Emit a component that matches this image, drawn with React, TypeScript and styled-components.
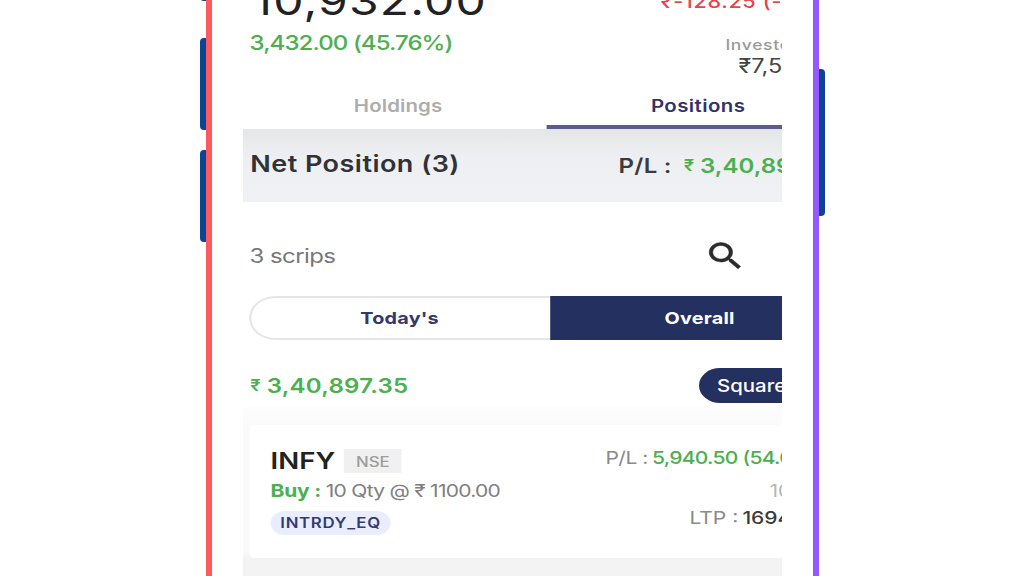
import React from "react";
import styled, { createGlobalStyle } from "styled-components";
import { MdSearch } from "react-icons/md";

const GlobalStyle = createGlobalStyle`
  * {
    box-sizing: border-box;
  }
  body {
    margin: 0;
    background-color: #ffffff;
    font-family: "Inter", "Liberation Sans", sans-serif;
  }
`;

const NAVY = "#24305f";
const GREEN = "#4caf50";

const Stage = styled.div`
  width: 1024px;
  height: 576px;
  overflow: hidden;
  display: flex;
  padding-left: 200px;
`;

const Keys = styled.div<{ $top: number }>`
  display: flex;
  flex-direction: column;
  gap: 20px;
  width: 6px;
  margin-top: ${(p) => p.$top}px;
`;

const Key = styled.div<{ $height: number; $top?: number; $right?: boolean }>`
  flex: none;
  height: ${(p) => p.$height}px;
  margin-top: ${(p) => p.$top || 0}px;
  background-color: #0b4493;
  border-radius: ${(p) => (p.$right ? "0 4px 4px 0" : "4px 0 0 4px")};
`;

const Frame = styled.div`
  width: 613px;
  height: 576px;
  border-left: 6px solid #ff5960;
  border-right: 6px solid #9159ff;
  padding: 0 31px;
`;

const Screen = styled.div`
  width: 539px;
  height: 576px;
  overflow: hidden;
`;

/* the app is wider than the visible part of the screen */
const Page = styled.div`
  width: 505px;
  height: 576px;
  transform: scaleX(1.2);
  transform-origin: 0 0;
  overflow: hidden;
`;

const Text = styled.span<{
  $size: number;
  $color: string;
  $weight?: number;
  $line?: number;
  $spacing?: number;
  $left?: number;
  $top?: number;
}>`
  flex: none;
  white-space: pre;
  font-size: ${(p) => p.$size}px;
  color: ${(p) => p.$color};
  font-weight: ${(p) => p.$weight || 400};
  line-height: ${(p) => p.$line || 24}px;
  letter-spacing: ${(p) => p.$spacing || 0}px;
  margin-left: ${(p) => p.$left || 0}px;
  margin-top: ${(p) => p.$top || 0}px;
`;

const Summary = styled.div`
  display: grid;
  grid-template-columns: 340px 1fr;
  height: 82px;
`;

const Column = styled.div<{ $top: number }>`
  display: flex;
  flex-direction: column;
  align-items: flex-start;
  margin-top: ${(p) => p.$top}px;
`;

const Tabs = styled.div`
  display: grid;
  grid-template-columns: 1fr 1fr;
  height: 47px;
`;

const Tab = styled.div<{ $active?: boolean }>`
  height: 47px;
  padding: ${(p) => (p.$active ? "2px 0 0 1px" : "2px 0 0 6px")};
  text-align: center;
  font-size: 17px;
  font-weight: 600;
  line-height: 44px;
  letter-spacing: ${(p) => (p.$active ? 0.35 : 0.1)}px;
  color: ${(p) => (p.$active ? "#30336b" : "#adadad")};
  border-bottom: ${(p) => (p.$active ? "4px solid #5c5b91" : "none")};
`;

const NetBar = styled.div`
  display: grid;
  grid-template-columns: 307px 1fr;
  align-items: center;
  height: 73px;
  padding-left: 6px;
  background: linear-gradient(#e4e6e7, #edeff2 40%, #eff1f5);
`;

const NetTitle = styled.div`
  padding-bottom: 4px;
  font-size: 22.5px;
  font-weight: 600;
  line-height: 24px;
  letter-spacing: 0.4px;
  color: #303236;
`;

const Line = styled.div<{ $height?: number }>`
  display: flex;
  align-items: center;
  height: ${(p) => (p.$height ? `${p.$height}px` : "auto")};
`;

const SearchRow = styled.div`
  display: grid;
  grid-template-columns: 378px 1fr;
  align-items: center;
  height: 94px;
  padding: 14px 0 0 5.5px;
`;

const SearchIcon = styled(MdSearch)`
  display: block;
  width: 36px;
  height: 36px;
  color: #2b2b2b;
  stroke-width: 0.3px;

  path[fill="none"] {
    stroke: none;
  }
`;

const Toggle = styled.div`
  display: grid;
  grid-template-columns: 1fr 1fr;
  width: 502px;
  height: 43px;
  margin: 0 0 1px 5px;
`;

const ToggleHalf = styled.div<{ $active?: boolean }>`
  padding-right: 2px;
  text-align: center;
  font-size: 16.5px;
  font-weight: 700;
  line-height: ${(p) => (p.$active ? 44 : 40)}px;
  letter-spacing: 0.2px;
  color: ${(p) => (p.$active ? "#ffffff" : "#34386c")};
  background-color: ${(p) => (p.$active ? NAVY : "#ffffff")};
  border: ${(p) => (p.$active ? "none" : "2px solid #e6e6e6")};
  border-right: none;
  border-radius: ${(p) => (p.$active ? "0 22px 22px 0" : "22px 0 0 22px")};
`;

const TotalRow = styled.div`
  display: grid;
  grid-template-columns: 373.5px 1fr;
  align-items: center;
  height: 67px;
  padding: 24px 0 0 6px;
`;

const SquareOff = styled.div`
  width: 122px;
  height: 35px;
  padding-left: 15.5px;
  border-radius: 18px;
  background-color: ${NAVY};
  color: #ffffff;
  font-size: 17px;
  font-weight: 500;
  line-height: 36px;
  white-space: nowrap;
`;

const List = styled.div`
  height: 169px;
  padding: 18px 0 0 6px;
  background: linear-gradient(#fdfdfd, #fafafa 12%, #fafafa 85%, #f3f3f3 90%);
`;

const Card = styled.div`
  display: grid;
  grid-template-columns: 279px 1fr;
  height: 133px;
  padding: 20px 0 0 17px;
  border-radius: 3px 0 0 3px;
  background-color: #ffffff;
`;

const Exchange = styled.span`
  width: 48px;
  height: 24px;
  margin-left: 7.5px;
  background-color: #f0f0f0;
  color: #9c9c9c;
  font-size: 14px;
  font-weight: 500;
  line-height: 25px;
  text-align: center;
`;

const Product = styled.span`
  width: 100px;
  height: 24px;
  margin-top: 2px;
  border-radius: 12px;
  background-color: #e9edfd;
  color: #343a73;
  font-size: 14px;
  font-weight: 600;
  line-height: 24px;
  letter-spacing: 0.55px;
  text-align: center;
`;

const App = () => {
  return (
    <>
      <GlobalStyle />
      <Stage>
        <Keys $top={-19}>
          <Key $height={20} />
          <Key $height={92} $top={17} />
          <Key $height={92} />
        </Keys>
        <Frame>
          <Screen>
            <Page>
              <Summary>
                <Column $top={-19}>
                  <Text $size={40} $line={40} $left={8} $spacing={0.95} $color="#222222">
                    10,932.00
                  </Text>
                  <Text
                    $size={20}
                    $line={44}
                    $left={5.5}
                    $weight={500}
                    $spacing={-0.75}
                    $color={GREEN}
                  >
                    3,432.00 (45.76%)
                  </Text>
                </Column>
                <Column $top={-10}>
                  <Text $size={18} $left={8} $weight={500} $spacing={0.55} $color="#e5444a">
                    ₹-128.25 (-1.16%)
                  </Text>
                  <Text
                    $size={14.5}
                    $line={62}
                    $left={62}
                    $weight={500}
                    $spacing={0.6}
                    $color="#999999"
                  >
                    Invested
                  </Text>
                  <Text $size={19.5} $line={1} $left={73} $top={-10} $color="#444444">
                    ₹7,500.00
                  </Text>
                </Column>
              </Summary>

              <Tabs>
                <Tab>Holdings</Tab>
                <Tab $active>Positions</Tab>
              </Tabs>

              <NetBar>
                <NetTitle>Net Position (3)</NetTitle>
                <Line>
                  <Text $size={20} $weight={600} $spacing={0.2} $color="#3a3c40">
                    P/L :
                  </Text>
                  <Text $size={15.5} $left={10} $weight={600} $color={GREEN}>
                    ₹
                  </Text>
                  <Text $size={20} $left={5} $weight={600} $color={GREEN}>
                    3,40,897.35
                  </Text>
                </Line>
              </NetBar>

              <SearchRow>
                <Text $size={20} $spacing={-0.5} $color="#777777">
                  3 scrips
                </Text>
                <SearchIcon />
              </SearchRow>

              <Toggle>
                <ToggleHalf>Today's</ToggleHalf>
                <ToggleHalf $active>Overall</ToggleHalf>
              </Toggle>

              <TotalRow>
                <Line>
                  <Text $size={15.5} $weight={600} $color={GREEN}>
                    ₹
                  </Text>
                  <Text $size={20} $left={5} $weight={600} $spacing={0.2} $color={GREEN}>
                    3,40,897.35
                  </Text>
                </Line>
                <SquareOff>Square Off</SquareOff>
              </TotalRow>

              <List>
                <Card>
                  <Column $top={4}>
                    <Line $height={24}>
                      <Text $size={23} $weight={600} $color="#222222">
                        INFY
                      </Text>
                      <Exchange>NSE</Exchange>
                    </Line>
                    <Line $height={36}>
                      <Text $size={17.5} $weight={700} $spacing={-0.2} $color={GREEN}>
                        Buy :
                      </Text>
                      <Text $size={17.5} $left={4} $spacing={-0.6} $color="#808080">
                        10 Qty @ ₹ 1100.00
                      </Text>
                    </Line>
                    <Product>INTRDY_EQ</Product>
                  </Column>
                  <Column $top={0}>
                    <Line $height={25}>
                      <Text $size={17.5} $spacing={-0.4} $color="#8a8a8a">
                        P/L :
                      </Text>
                      <Text
                        $size={17.5}
                        $left={3.5}
                        $weight={500}
                        $spacing={-0.6}
                        $color={GREEN}
                      >
                        5,940.50 (54.00%)
                      </Text>
                    </Line>
                    <Line $height={41}>
                      <Text $size={17} $left={137} $color="#b5b5b5">
                        10
                      </Text>
                    </Line>
                    <Line $height={14}>
                      <Text $size={17.5} $left={70} $color="#8a8a8a">
                        LTP :
                      </Text>
                      <Text $size={17.5} $left={3.5} $weight={500} $color="#3c3c3c">
                        1694.05
                      </Text>
                    </Line>
                  </Column>
                </Card>
              </List>
            </Page>
          </Screen>
        </Frame>
        <Keys $top={69}>
          <Key $height={147} $right />
        </Keys>
      </Stage>
    </>
  );
};

export default App;
